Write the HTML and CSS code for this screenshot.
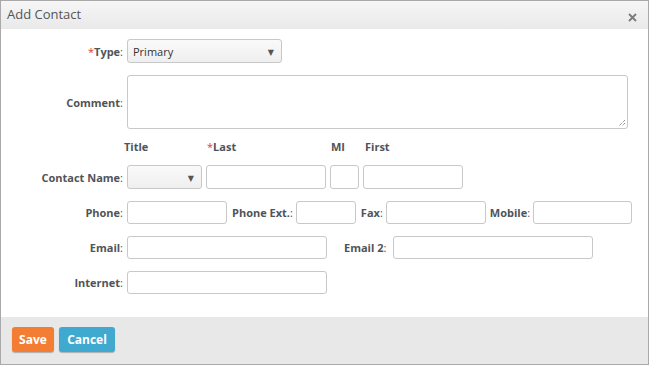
FILE: index.html
```html
<!DOCTYPE html>
<html>
<head>
<meta charset="utf-8">
<link rel="stylesheet" href="styles.css">
</head>
<body>
<div class="dialog">
  <div class="header">
    <span class="title">Add Contact</span>
    <svg class="close" width="9" height="9" viewBox="0 0 9 9"><path d="M1 1 L8 8 M8 1 L1 8" stroke="#7a7a7a" stroke-width="1.8" fill="none"/></svg>
  </div>
  <div class="body">
    <div class="row">
      <label class="lbl"><span class="req">*</span><b>Type</b>:</label>
      <div class="select sel-type"><span>Primary</span><span class="arrow">&#9660;</span></div>
    </div>
    <div class="row">
      <label class="lbl"><b>Comment</b>:</label>
      <div class="textarea">
        <svg class="grip" width="9" height="9" viewBox="0 0 9 9"><path d="M8 2 L2 8 M8 5 L5 8" stroke="#666" stroke-width="1" stroke-dasharray="1 1" fill="none"/></svg>
      </div>
    </div>
    <div class="row heads">
      <span class="lbl"></span>
      <b class="h h-title">Title</b>
      <b class="h h-last"><span class="req">*</span>Last</b>
      <b class="h h-mi">MI</b>
      <b class="h h-first">First</b>
    </div>
    <div class="row">
      <label class="lbl"><b>Contact Name</b>:</label>
      <div class="select sel-title"><span></span><span class="arrow">&#9660;</span></div>
      <div class="input w120 ml4"></div>
      <div class="input w29 ml4"></div>
      <div class="input w100 ml4"></div>
    </div>
    <div class="row short">
      <label class="lbl"><b>Phone</b>:</label>
      <div class="input w100"></div>
      <label class="il ml5"><b>Phone Ext.</b>:</label>
      <div class="input w60"></div>
      <label class="il ml5"><b>Fax</b>:</label>
      <div class="input w100"></div>
      <label class="il ml4"><b>Mobile</b>:</label>
      <div class="input w99"></div>
    </div>
    <div class="row short">
      <label class="lbl"><b>Email</b>:</label>
      <div class="input w200"></div>
      <label class="il ml17 mr7"><b>Email 2</b>:</label>
      <div class="input w200"></div>
    </div>
    <div class="row short">
      <label class="lbl"><b>Internet</b>:</label>
      <div class="input w200"></div>
    </div>
  </div>
  <div class="footer">
    <button class="btn save">Save</button>
    <button class="btn cancel">Cancel</button>
  </div>
</div>
</body>
</html>
```

FILE: styles.css
```css
* { box-sizing: border-box; }
html, body { margin: 0; padding: 0; }
body {
  width: 649px;
  height: 365px;
  font-family: "Open Sans", "DejaVu Sans", sans-serif;
  background: #fff;
}
.dialog {
  width: 649px;
  height: 365px;
  border: 1px solid #a9a9a9;
  display: flex;
  flex-direction: column;
}
.header {
  height: 28px;
  flex: none;
  background: linear-gradient(#f6f6f6, #e9e9e9);
  display: flex;
  align-items: center;
  justify-content: space-between;
  padding: 0 11px 0 6px;
}
.title {
  font-size: 13px;
  color: #555;
  position: relative;
  top: -1px;
}
.close {
  position: relative;
  top: 2px;
}
.body {
  flex: 1;
  padding: 10px 0 0 0;
  display: flex;
  flex-direction: column;
  gap: 12px;
}
.row {
  display: flex;
  align-items: center;
  font-size: 11px;
  color: #505458;
}
.row b { font-weight: 700; }
.lbl {
  width: 122px;
  margin-right: 4px;
  text-align: right;
  flex: none;
}
.il { margin-right: 3px; white-space: nowrap; }
.req { color: #e0402f; font-weight: normal; }
.input, .select, .textarea {
  height: 24px;
  border: 1px solid #c8c8c8;
  border-radius: 3px;
  background: #fff;
  flex: none;
}
.short .input { height: 23px; }
.select {
  background: linear-gradient(#fafafa, #efefef);
  display: flex;
  align-items: center;
  justify-content: space-between;
  padding: 0 7px 0 5px;
  color: #333;
}
.arrow { font-size: 8px; color: #555; }
.sel-type { width: 155px; }
.sel-title { width: 75px; }
.textarea {
  width: 501px;
  height: 54px;
  position: relative;
}
.grip { position: absolute; right: 1px; bottom: 1px; }
.heads { height: 12px; line-height: 12px; }
.h { display: block; flex: none; }
.h-title { margin-left: -3px; width: 83px; }
.h-last { width: 124px; }
.h-mi { width: 34px; }
.w29 { width: 29px; }
.w60 { width: 60px; }
.w99 { width: 99px; }
.w100 { width: 100px; }
.w120 { width: 120px; }
.w200 { width: 200px; }
.ml4 { margin-left: 4px; }
.ml5 { margin-left: 5px; }
.ml17 { margin-left: 17px; }
.mr7 { margin-right: 7px; }
.footer {
  height: 47px;
  flex: none;
  background: #e8e8e8;
  display: flex;
  align-items: center;
  gap: 5px;
  padding: 0 0 0 11px;
}
.btn {
  height: 25px;
  border: none;
  border-radius: 3px;
  color: #fff;
  font-family: "Open Sans", "DejaVu Sans", sans-serif;
  font-weight: bold;
  font-size: 12px;
  padding: 0 6px;
  box-shadow: 0 1px 1px rgba(0,0,0,0.25);
  position: relative;
  top: -1px;
}
.save { background: #f47d34; width: 42px; }
.cancel { background: #40a9cf; width: 56px; }
```
